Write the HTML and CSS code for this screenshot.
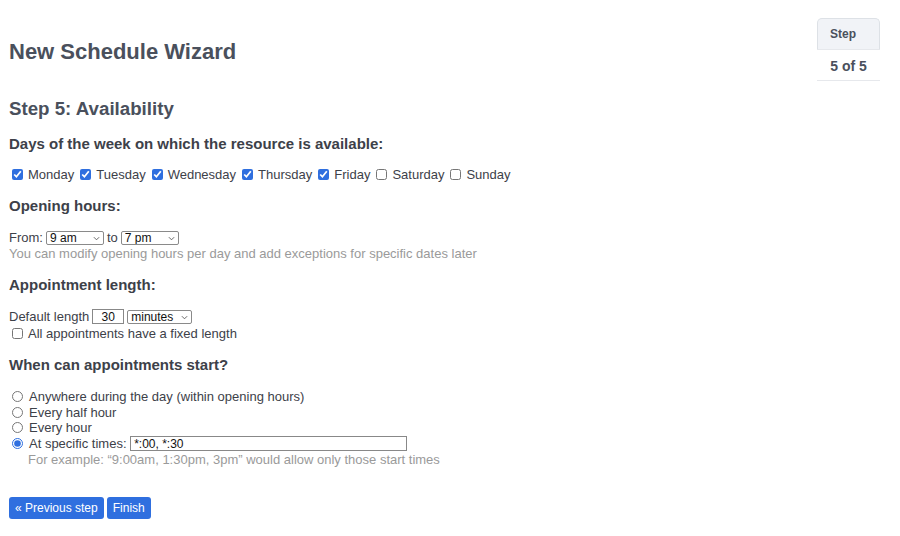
FILE: index.html
```html
<!DOCTYPE html>
<html lang="en">
<head>
    <meta charset="UTF-8">
    <meta name="viewport" content="width=device-width, initial-scale=1.0">
    <title>New Schedule Wizard</title>
    <link rel="stylesheet" href="styles.css">
</head>
<body>

<div class="page">
    <div class="main">
        <h1>New Schedule Wizard</h1>
        <h2>Step 5: Availability</h2>

        <h3>Days of the week on which the resource is available:</h3>
        <div class="days">
            <label><input type="checkbox" checked>Monday</label>
            <label><input type="checkbox" checked>Tuesday</label>
            <label><input type="checkbox" checked>Wednesday</label>
            <label><input type="checkbox" checked>Thursday</label>
            <label><input type="checkbox" checked>Friday</label>
            <label><input type="checkbox">Saturday</label>
            <label><input type="checkbox">Sunday</label>
        </div>

        <h3>Opening hours:</h3>
        <div class="line">
            <span>From:</span>
            <span class="sel hours"><select><option>9 am</option></select><svg viewBox="0 0 8 5"><path d="M1 1l3 3 3-3"/></svg></span>
            <span>to</span>
            <span class="sel hours"><select><option>7 pm</option></select><svg viewBox="0 0 8 5"><path d="M1 1l3 3 3-3"/></svg></span>
        </div>
        <div class="hint">You can modify opening hours per day and add exceptions for specific dates later</div>

        <h3>Appointment length:</h3>
        <div class="line">
            <span>Default length</span>
            <input type="text" class="len" value="30">
            <span class="sel unit"><select><option>minutes</option></select><svg viewBox="0 0 8 5"><path d="M1 1l3 3 3-3"/></svg></span>
        </div>
        <div class="check"><label><input type="checkbox">All appointments have a fixed length</label></div>

        <h3>When can appointments start?</h3>
        <div class="radios">
            <label><input type="radio" name="start">Anywhere during the day (within opening hours)</label>
            <label><input type="radio" name="start">Every half hour</label>
            <label><input type="radio" name="start">Every hour</label>
            <label><input type="radio" name="start" checked>At specific times: <input type="text" class="times" value="*:00, *:30"></label>
            <div class="hint indent">For example: “9:00am, 1:30pm, 3pm” would allow only those start times</div>
        </div>

        <div class="buttons">
            <button>« Previous step</button>
            <button>Finish</button>
        </div>
    </div>

    <div class="side">
        <div class="step-head">Step</div>
        <div class="step-val">5 of 5</div>
    </div>
</div>

</body>
</html>
```

FILE: styles.css
```css
body {
    margin: 0;
    font-family: "Liberation Sans", Arial, sans-serif;
    font-size: 13px;
    color: #3d4149;
    background: #fff;
}
.page {
    display: flex;
    justify-content: space-between;
    padding: 17px 20px 0 9px;
}
h1 {
    font-size: 22px;
    color: #4a505c;
    margin: 23px 0 0;
    line-height: 24px;
}
h2 {
    font-size: 18.7px;
    color: #4a505c;
    margin: 34px 0 0;
    line-height: 22px;
}
h3 {
    font-size: 15px;
    color: #3d4149;
    margin: 12px 0 12px;
    line-height: 22px;
}
.main h2 + h3 {
    margin-top: 13px;
}
label {
    white-space: nowrap;
}
input[type="checkbox"],
input[type="radio"] {
    width: 11px;
    height: 11px;
    margin: 0 5px 0 3px;
    vertical-align: -1px;
    accent-color: #2f6fdf;
}
input[type="radio"] {
    margin-right: 6px;
}
.days {
    display: flex;
    gap: 3px;
    line-height: 16px;
    margin-bottom: 12px;
}
.line {
    display: flex;
    align-items: center;
    gap: 3px;
    height: 17px;
}
.check {
    line-height: 17px;
}
.sel {
    position: relative;
    display: block;
    height: 14px;
}
.sel select {
    appearance: none;
    -webkit-appearance: none;
    font-family: "Liberation Sans", Arial, sans-serif;
    font-size: 12px;
    line-height: 12px;
    width: 100%;
    height: 14px;
    padding: 0 0 0 3px;
    border: 1px solid #8a8a8a;
    border-radius: 2px;
    background: #fff;
    color: #111;
    display: block;
}
.sel svg {
    position: absolute;
    right: 4px;
    top: 5px;
    width: 7px;
    height: 5px;
    fill: none;
    stroke: #555;
    stroke-width: 1;
}
.hours {
    width: 58px;
}
.unit {
    width: 65px;
}
input[type="text"] {
    font-family: "Liberation Sans", Arial, sans-serif;
    font-size: 12px;
    height: 15px;
    padding: 0 3px;
    border: 1px solid #888;
    color: #111;
    box-sizing: border-box;
}
.len {
    width: 32px;
    height: 16px;
    margin: 0;
    text-align: center;
}
.times {
    width: 277px;
    height: 17px;
}
.hint {
    color: #9a9a9a;
    line-height: 16px;
}
.indent {
    padding-left: 19px;
    margin-top: 1px;
}
.radios {
    display: flex;
    flex-direction: column;
    line-height: 15.5px;
    margin-top: 13px;
}
.buttons {
    margin-top: 29px;
    display: flex;
    gap: 3px;
}
button {
    font-family: "Liberation Sans", Arial, sans-serif;
    font-size: 12px;
    background: #2f6fdf;
    color: #fff;
    border: none;
    border-radius: 3px;
    height: 22px;
    padding: 0 6px;
}
.side {
    width: 63px;
    margin-top: 1px;
}
.step-head {
    background: #f1f3f7;
    border: 1px solid #dde1e6;
    border-bottom: none;
    border-radius: 5px 5px 0 0;
    font-size: 12px;
    font-weight: bold;
    color: #4a505c;
    padding: 8px 0 8px 12px;
    line-height: 14px;
}
.step-val {
    border-top: 1px solid #e6e8ec;
    border-bottom: 1px solid #e6e8ec;
    font-size: 14px;
    font-weight: bold;
    color: #4a505c;
    text-align: center;
    padding: 8px 0 6px;
    line-height: 16px;
}
```
